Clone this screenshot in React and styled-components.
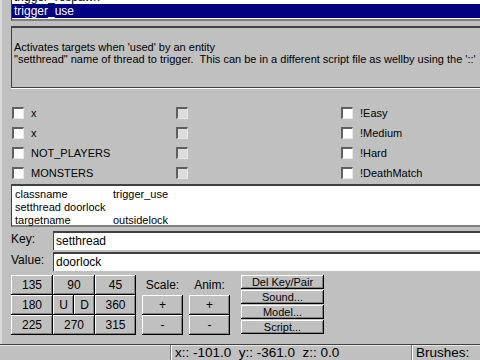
import React from "react"
import styled, { createGlobalStyle } from "styled-components"

const GlobalStyle = createGlobalStyle`
  html, body {
    margin: 0;
    padding: 0;
    background: #c0c0c0;
    overflow: hidden;
  }
  body {
    font-family: "Liberation Sans", Arial, sans-serif;
    font-size: 11px;
    color: #000;
  }
`

const flags = [
  ["x", "", "!Easy"],
  ["x", "", "!Medium"],
  ["NOT_PLAYERS", "", "!Hard"],
  ["MONSTERS", "", "!DeathMatch"],
]

const pairs = [
  ["classname", "trigger_use"],
  ["setthread doorlock", ""],
  ["targetname", "outsidelock"],
]

function App() {
  return (
    <Window>
      <GlobalStyle />
      <Main>
        <ClassList>
          <ListItem>trigger_respawn</ListItem>
          <ListItem $selected>trigger_use</ListItem>
        </ClassList>

        <Description>
          <p>Activates targets when 'used' by an entity</p>
          <p>"setthread" name of thread to trigger.&nbsp; This can be in a different script file as wellby using the '::'</p>
        </Description>

        <FlagGrid>
          {flags.map((row, i) => (
            <React.Fragment key={i}>
              <Flag>
                <Check />
                <span>{row[0]}</span>
              </Flag>
              <Flag>
                <Check $dim />
              </Flag>
              <Flag>
                <Check />
                <span>{row[2]}</span>
              </Flag>
            </React.Fragment>
          ))}
        </FlagGrid>

        <PairList>
          {pairs.map(([k, v], i) => (
            <PairRow key={i}>
              <PairKey>{k}</PairKey>
              <span>{v}</span>
            </PairRow>
          ))}
        </PairList>

        <FieldRow $gap="4px">
          <FieldLabel>Key:</FieldLabel>
          <Field>setthread</Field>
        </FieldRow>
        <FieldRow>
          <FieldLabel>Value:</FieldLabel>
          <Field>doorlock</Field>
        </FieldRow>

        <Controls>
          <AngleGrid>
            <Button>135</Button>
            <Button $span={2}>90</Button>
            <Button>45</Button>
            <Button>180</Button>
            <Button>U</Button>
            <Button>D</Button>
            <Button>360</Button>
            <Button>225</Button>
            <Button $span={2}>270</Button>
            <Button>315</Button>
          </AngleGrid>

          <StepGroup>
            <StepLabel>Scale:</StepLabel>
            <Button>+</Button>
            <Button>-</Button>
          </StepGroup>
          <StepGroup>
            <StepLabel>Anim:</StepLabel>
            <Button>+</Button>
            <Button>-</Button>
          </StepGroup>

          <ActionStack>
            <SmallButton>Del Key/Pair</SmallButton>
            <SmallButton>Sound...</SmallButton>
            <SmallButton>Model...</SmallButton>
            <SmallButton>Script...</SmallButton>
          </ActionStack>
        </Controls>
      </Main>

      <StatusBar>
        <Pane $w="166px" />
        <Pane>x:: -101.0&nbsp; y:: -361.0&nbsp; z:: 0.0</Pane>
        <Pane $w="64px">Brushes:</Pane>
      </StatusBar>
    </Window>
  )
}

const Window = styled.div`
  width: 480px;
  height: 360px;
  display: flex;
  flex-direction: column;
  background: #c0c0c0;
  overflow: hidden;
`

const Main = styled.div`
  flex: 1;
  display: flex;
  flex-direction: column;
  padding-left: 9px;
  border-left: 2px solid #dadada;
  min-height: 0;
`

const ClassList = styled.div`
  height: 18px;
  background: #fff;
  border-left: 1px solid #404040;
  border-bottom: 2px solid #808080;
  display: flex;
  flex-direction: column;
  justify-content: flex-end;
  overflow: hidden;
  padding-bottom: 1px;
`

const ListItem = styled.div`
  flex: none;
  height: 14px;
  line-height: 14px;
  padding-left: 2px;
  font-size: 12px;
  background: ${p => (p.$selected ? "#000080" : "#fff")};
  color: ${p => (p.$selected ? "#fff" : "#000")};
`

const Description = styled.div`
  margin-top: 5px;
  height: 46px;
  padding-top: 13px;
  border-top: 2px solid #404040;
  border-left: 1px solid #404040;
  border-bottom: 1px solid #404040;
  box-shadow: 0 1px 0 #fff;
  padding-left: 2px;
  white-space: nowrap;
  overflow: hidden;

  p {
    margin: 0;
    line-height: 12px;
  }
`

const FlagGrid = styled.div`
  margin-top: 15px;
  display: grid;
  grid-template-columns: 164px 165px 1fr;
  grid-auto-rows: 20px;
`

const Flag = styled.label`
  display: flex;
  align-items: center;
  gap: 7px;
  padding-left: 1px;
`

const Check = styled.span`
  width: 9px;
  height: 9px;
  background: ${p => (p.$dim ? "#dcdcdc" : "#fff")};
  border-top: 2px solid #606060;
  border-left: 2px solid #606060;
  border-right: 1px solid #e8e8e8;
  border-bottom: 1px solid #e8e8e8;
`

const PairList = styled.div`
  margin-top: 1px;
  height: 37px;
  padding: 2px 0 0 3px;
  background: #fff;
  border-top: 2px solid #404040;
  border-left: 1px solid #404040;
  border-bottom: 2px solid #808080;
`

const PairRow = styled.div`
  display: flex;
  line-height: 13px;
`

const PairKey = styled.span`
  width: 98px;
  white-space: nowrap;
`

const FieldRow = styled.div`
  display: flex;
  align-items: stretch;
  height: 19px;
  margin-top: ${p => p.$gap || "2px"};
`

const FieldLabel = styled.span`
  width: 42px;
  font-size: 12px;
  line-height: 16px;
`

const Field = styled.div`
  flex: 1;
  background: #fff;
  border-top: 2px solid #404040;
  border-left: 1px solid #404040;
  padding-left: 2px;
  font-size: 12px;
  line-height: 16px;
`

const Controls = styled.div`
  margin-top: 4px;
  display: flex;
  align-items: flex-start;
`

const AngleGrid = styled.div`
  display: grid;
  grid-template-columns: 42px 21px 21px 41px;
  grid-auto-rows: 20px;
`

const Button = styled.button`
  grid-column: span ${p => p.$span || 1};
  margin: 0;
  padding: 0;
  font-family: "Liberation Sans", Arial, sans-serif;
  font-size: 12px;
  color: #000;
  background: #c0c0c0;
  border: none;
  box-shadow: inset -1px -1px #000, inset 1px 1px #fff, inset -2px -2px #808080;
`

const StepGroup = styled.div`
  width: 41px;
  margin-left: 6px;
  display: grid;
  grid-auto-rows: 20px;
`

const StepLabel = styled.span`
  text-align: center;
  line-height: 20px;
  font-size: 12px;
`

const ActionStack = styled.div`
  width: 83px;
  margin-left: 11px;
  display: flex;
  flex-direction: column;
  gap: 1px;
`

const SmallButton = styled(Button)`
  height: 14px;
  font-size: 11px;
  line-height: 12px;
`

const StatusBar = styled.div`
  flex: none;
  height: 15px;
  display: flex;
  border-top: 1px solid #404040;
  box-shadow: inset 0 1px #e8e8e8;
`

const Pane = styled.div`
  ${p => (p.$w ? `width: ${p.$w};` : "flex: 1;")}
  padding-left: 4px;
  border-left: 1px solid #808080;
  box-shadow: inset 1px 0 #fff;
  font-size: 13.5px;
  line-height: 16px;
  white-space: nowrap;
  overflow: hidden;

  &:first-child {
    border-left: none;
    box-shadow: none;
  }
`

export default App
